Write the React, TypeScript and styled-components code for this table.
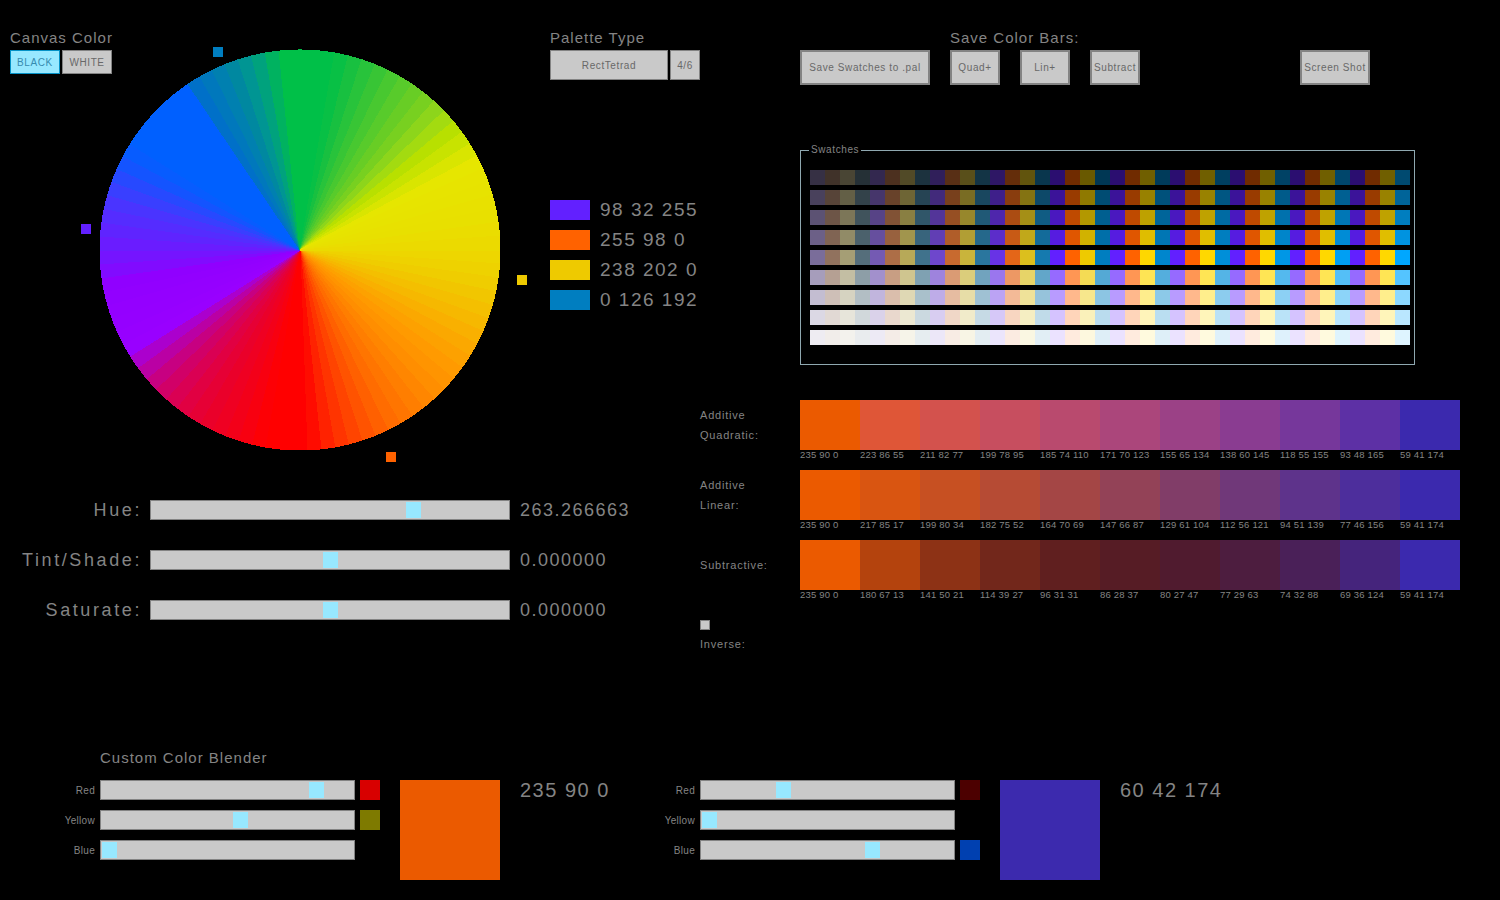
import React from "react";
import styled, { createGlobalStyle } from "styled-components";

const TEXT = "#848484";
const BORDER = "#838383";
const BASE = "#c9c9c9";
const BTN_TEXT = "#686868";
const THUMB = "#97e8ff";

const GlobalStyle = createGlobalStyle`
  * { box-sizing: border-box; }
  html, body { margin: 0; padding: 0; background: #000; }
  body { font-family: "Liberation Sans", Arial, sans-serif; }
`;

type RGB = [number, number, number];

// ---------- data ----------
const PALETTE: RGB[] = [
  [98, 32, 255],
  [255, 98, 0],
  [238, 202, 0],
  [0, 126, 192],
];

const SHADE = [0.44, 0.6, 0.75, 0.88];
const TINT = [0.33, 0.55, 0.73, 0.87];

const rgb = (c: number[]) =>
  `rgb(${c.map((v) => Math.max(0, Math.min(255, Math.round(v)))).join(",")})`;

function groupColor(base: RGB, g: number): number[] {
  if (g <= 4) {
    const s = 0.2 + 0.2 * g;
    const m = (base[0] + base[1] + base[2]) / 3;
    return base.map((c) => m + s * (c - m));
  }
  const f = Math.min(1 + 0.066 * (g - 4), 255 / Math.max(...base));
  return base.map((c) => c * f);
}

function swatchColor(row: number, col: number) {
  let c = groupColor(PALETTE[col % 4], Math.floor(col / 4));
  if (row < 4) c = c.map((v) => v * SHADE[row]);
  else if (row > 4) c = c.map((v) => v + (255 - v) * TINT[row - 5]);
  return rgb(c);
}

const BARS = [
  {
    label: ["Additive", "Quadratic:"],
    values: ["235 90 0", "223 86 55", "211 82 77", "199 78 95", "185 74 110", "171 70 123", "155 65 134", "138 60 145", "118 55 155", "93 48 165", "59 41 174"],
  },
  {
    label: ["Additive", "Linear:"],
    values: ["235 90 0", "217 85 17", "199 80 34", "182 75 52", "164 70 69", "147 66 87", "129 61 104", "112 56 121", "94 51 139", "77 46 156", "59 41 174"],
  },
  {
    label: ["Subtractive:"],
    values: ["235 90 0", "180 67 13", "141 50 21", "114 39 27", "96 31 31", "86 28 37", "80 27 47", "77 29 63", "74 32 88", "69 36 124", "59 41 174"],
  },
];

const WHEEL_STOPS: [number, string][] = [
  [0, "#ecd800"], [8, "#eed000"], [15, "#f2c400"], [22, "#f6b800"], [30, "#fba800"],
  [38, "#ff9a00"], [46, "#ff8e00"], [54, "#ff7e00"], [62, "#ff6c00"], [68, "#ff5a00"],
  [74, "#ff4400"], [79, "#ff3000"], [84, "#ff1800"], [88, "#ff0000"], [100, "#ff0000"],
  [106, "#f80010"], [113, "#f00020"], [120, "#e8002e"], [127, "#e00045"], [133, "#d40060"],
  [139, "#c40088"], [145, "#b000c0"], [150, "#9900ff"], [170, "#9000ff"], [176, "#7a10ff"],
  [182, "#6a1cff"], [188, "#5a28ff"], [194, "#4a34ff"], [200, "#3044ff"], [206, "#1454ff"],
  [212, "#0060ff"], [234, "#0060ff"], [238, "#0070c8"], [246, "#0080b0"], [250, "#0088a0"],
  [255, "#009890"], [260, "#00a870"], [265, "#00c048"], [280, "#00c048"], [286, "#18c040"],
  [292, "#30c438"], [298, "#48c830"], [304, "#60cc28"], [310, "#78d020"], [316, "#98d818"],
  [322, "#b8e000"], [328, "#d0e400"], [333, "#e6e600"], [350, "#e8e000"], [360, "#ecd800"],
];

const hex = (h: string) => [1, 3, 5].map((i) => parseInt(h.slice(i, i + 2), 16));

function wheelColor(a: number) {
  for (let i = 0; i < WHEEL_STOPS.length - 1; i++) {
    const [a0, c0] = WHEEL_STOPS[i];
    const [a1, c1] = WHEEL_STOPS[i + 1];
    if (a >= a0 && a <= a1) {
      const t = (a - a0) / (a1 - a0 || 1);
      const x = hex(c0);
      const y = hex(c1);
      return rgb(x.map((v, k) => v + (y[k] - v) * t));
    }
  }
  return WHEEL_STOPS[0][1];
}

const CX = 300;
const CY = 250;
const R = 200;
const STEP = 4;

// banded wheel, one wedge per STEP degrees
const wedges = Array.from({ length: 360 / STEP }, (_, i) => {
  const a0 = (i * STEP * Math.PI) / 180;
  const a1 = ((i + 1) * STEP * Math.PI) / 180;
  const p = (a: number) => `${CX + R * Math.cos(a)} ${CY + R * Math.sin(a)}`;
  return { d: `M${CX} ${CY} L${p(a0)} A${R} ${R} 0 0 1 ${p(a1)} Z`, fill: wheelColor(i * STEP + STEP / 2) };
});

const MARKERS = [
  { x: 213, y: 47, c: PALETTE[3] },
  { x: 81, y: 224, c: PALETTE[0] },
  { x: 517, y: 275, c: PALETTE[2] },
  { x: 386, y: 452, c: PALETTE[1] },
];

// ---------- styled parts ----------
const Page = styled.div`
  width: 1500px;
  height: 900px;
  background: #000;
  overflow: hidden;
  color: ${TEXT};
  font-family: "Liberation Sans", Arial, sans-serif;
  display: flex;
  flex-direction: column;
`;

const MainRow = styled.div`
  display: flex;
  height: 750px;
`;

const LeftColumn = styled.div`
  width: 700px;
  display: flex;
  flex-direction: column;
`;

const TopLeft = styled.div`
  display: flex;
  height: 470px;
`;

const WheelPanel = styled.div`
  width: 540px;
  padding: 30px 0 0 10px;
  display: flex;
  align-items: flex-start;
`;

const ControlsCol = styled.div`
  width: 102px;
  display: flex;
  flex-direction: column;
`;

const WheelSvg = styled.svg`
  margin-left: 8px;
  overflow: visible;
  flex: none;
`;

const Heading = styled.div<{ $indent?: number }>`
  font-size: 15px;
  line-height: 15px;
  height: 15px;
  letter-spacing: 1px;
  white-space: nowrap;
  margin-bottom: 5px;
  padding-left: ${(p) => p.$indent ?? 0}px;
`;

const ButtonRow = styled.div<{ $gap: number; $indent?: number }>`
  display: flex;
  gap: ${(p) => p.$gap}px;
  margin-left: ${(p) => p.$indent ?? 0}px;
`;

const Button = styled.button<{ $w: number; $h: number; $bw?: number; $active?: boolean; $ml?: number }>`
  width: ${(p) => p.$w}px;
  height: ${(p) => p.$h}px;
  margin: 0 0 0 ${(p) => p.$ml ?? 0}px;
  padding: 0;
  flex: none;
  display: flex;
  align-items: center;
  justify-content: center;
  background: ${(p) => (p.$active ? THUMB : BASE)};
  border: ${(p) => p.$bw ?? 1}px solid ${(p) => (p.$active ? "#0492c7" : BORDER)};
  color: ${(p) => (p.$active ? "#368baf" : BTN_TEXT)};
  font-family: inherit;
  font-size: 10px;
  letter-spacing: 0.6px;
  white-space: nowrap;
  overflow: hidden;
  cursor: pointer;
`;

const PalettePanel = styled.div`
  width: 160px;
  padding: 30px 0 0 10px;
  display: flex;
  flex-direction: column;
`;

const SwatchList = styled.div`
  margin-top: 120px;
  display: flex;
  flex-direction: column;
  gap: 10px;
`;

const SwatchItem = styled.div`
  display: flex;
  align-items: center;
  gap: 10px;
  height: 20px;
`;

const Chip = styled.div<{ $c: string; $w: number; $h: number }>`
  width: ${(p) => p.$w}px;
  height: ${(p) => p.$h}px;
  background: ${(p) => p.$c};
  flex: none;
`;

const BigValue = styled.span<{ $size?: number; $ml?: number }>`
  font-size: ${(p) => p.$size ?? 19}px;
  line-height: 20px;
  letter-spacing: 1.5px;
  white-space: nowrap;
  margin-left: ${(p) => p.$ml ?? 0}px;
`;

const SliderBlock = styled.div`
  margin-top: 30px;
  display: flex;
  flex-direction: column;
  gap: 30px;
`;

const SliderRow = styled.div`
  display: flex;
  align-items: center;
  gap: 10px;
  height: 20px;
`;

const SliderLabel = styled.div`
  width: 142px;
  margin-right: -2px;
  text-align: right;
  font-size: 18px;
  line-height: 20px;
  letter-spacing: 2.6px;
  white-space: nowrap;
`;

const Track = styled.div<{ $w: number }>`
  position: relative;
  width: ${(p) => p.$w}px;
  height: 20px;
  flex: none;
  background: ${BASE};
  border: 1px solid ${BORDER};
`;

const Thumb = styled.div`
  position: absolute;
  top: 1px;
  bottom: 1px;
  width: 15px;
  background: ${THUMB};
`;

const RightColumn = styled.div`
  width: 800px;
  padding-top: 30px;
  display: flex;
  flex-direction: column;
`;

const GroupBox = styled.div`
  position: relative;
  margin: 65px 0 0 100px;
  width: 615px;
  height: 215px;
  border: 1px solid #8fa8b0;
  padding: 19px 0 0 9px;
`;

const GroupLabel = styled.span`
  position: absolute;
  top: -6px;
  left: 8px;
  padding: 0 2px;
  background: #000;
  font-size: 10px;
  line-height: 10px;
  letter-spacing: 0.6px;
`;

const SwatchGrid = styled.div`
  display: grid;
  grid-template-columns: repeat(40, 15px);
  grid-auto-rows: 15px;
  row-gap: 5px;
`;

const BarsBlock = styled.div`
  margin-top: 35px;
  display: flex;
  flex-direction: column;
`;

const BarRow = styled.div`
  display: flex;
  height: 70px;
`;

const BarLabel = styled.div`
  width: 100px;
  height: 50px;
  display: flex;
  flex-direction: column;
  justify-content: center;
  font-size: 11px;
  line-height: 20px;
  letter-spacing: 0.8px;
  white-space: nowrap;
`;

const Cells = styled.div`
  display: flex;
`;

const Cell = styled.div`
  width: 60px;
  display: flex;
  flex-direction: column;
`;

const CellColor = styled.div<{ $c: string }>`
  height: 50px;
  background: ${(p) => p.$c};
`;

const CellText = styled.div`
  font-size: 9.5px;
  line-height: 10px;
  letter-spacing: 0.2px;
  white-space: nowrap;
`;

const CheckBox = styled.div`
  margin-top: 10px;
  width: 10px;
  height: 10px;
  background: ${BASE};
  border: 1px solid ${BORDER};
`;

const SmallLabel = styled.div`
  margin-top: 9px;
  font-size: 11px;
  line-height: 11px;
  letter-spacing: 0.8px;
`;

const BlenderSection = styled.div`
  display: flex;
  flex-direction: column;
`;

const BlenderRow = styled.div`
  display: flex;
  padding-left: 40px;
  margin-top: 10px;
`;

const Blender = styled.div`
  width: 600px;
  display: flex;
  align-items: flex-start;
`;

const BlendSliders = styled.div`
  display: flex;
  flex-direction: column;
  gap: 10px;
`;

const BlendRow = styled.div`
  display: flex;
  align-items: center;
  gap: 5px;
  height: 20px;
`;

const BlendLabel = styled.div`
  width: 55px;
  text-align: right;
  font-size: 10px;
  letter-spacing: 0.3px;
  white-space: nowrap;
`;

const ColorBlock = styled.div<{ $c: string }>`
  width: 100px;
  height: 100px;
  margin-left: 20px;
  background: ${(p) => p.$c};
  flex: none;
`;

// ---------- components ----------
function Slider({ w, frac }: { w: number; frac: number }) {
  const left = Math.max(1, Math.min(w - 18, frac * w - 8.5));
  return (
    <Track $w={w}>
      <Thumb style={{ left }} />
    </Track>
  );
}

type BlendChannel = { name: string; v: number; chip?: string };

function ColorBlender({ channels, color, value }: { channels: BlendChannel[]; color: string; value: string }) {
  return (
    <Blender>
      <BlendSliders>
        {channels.map((ch) => (
          <BlendRow key={ch.name}>
            <BlendLabel>{ch.name}</BlendLabel>
            <Slider w={255} frac={ch.v / 255} />
            <Chip $c={ch.chip ?? "transparent"} $w={20} $h={20} />
          </BlendRow>
        ))}
      </BlendSliders>
      <ColorBlock $c={color} />
      <BigValue $size={20} $ml={20}>{value}</BigValue>
    </Blender>
  );
}

export default function App() {
  const sliders = [
    { label: "Hue:", frac: 263.266663 / 360, value: "263.266663" },
    { label: "Tint/Shade:", frac: 0.5, value: "0.000000" },
    { label: "Saturate:", frac: 0.5, value: "0.000000" },
  ];

  return (
    <Page>
      <GlobalStyle />
      <MainRow>
        <LeftColumn>
          <TopLeft>
            <WheelPanel>
              <ControlsCol>
                <Heading>Canvas Color</Heading>
                <ButtonRow $gap={2}>
                  <Button $w={50} $h={24} $active>BLACK</Button>
                  <Button $w={50} $h={24}>WHITE</Button>
                </ButtonRow>
              </ControlsCol>
              <WheelSvg width={410} height={440} viewBox="120 30 410 440" shapeRendering="crispEdges">
                {wedges.map((w, i) => (
                  <path key={i} d={w.d} fill={w.fill} stroke={w.fill} strokeWidth={1} strokeLinejoin="bevel" />
                ))}
                {MARKERS.map((m, i) => (
                  <rect key={i} x={m.x} y={m.y} width={10} height={10} fill={rgb(m.c)} />
                ))}
              </WheelSvg>
            </WheelPanel>

            <PalettePanel>
              <Heading>Palette Type</Heading>
              <ButtonRow $gap={2}>
                <Button $w={118} $h={30}>RectTetrad</Button>
                <Button $w={30} $h={30}>4/6</Button>
              </ButtonRow>
              <SwatchList>
                {PALETTE.map((c) => (
                  <SwatchItem key={c.join()}>
                    <Chip $c={rgb(c)} $w={40} $h={20} />
                    <BigValue>{c.join(" ")}</BigValue>
                  </SwatchItem>
                ))}
              </SwatchList>
            </PalettePanel>
          </TopLeft>

          <SliderBlock>
            {sliders.map((s) => (
              <SliderRow key={s.label}>
                <SliderLabel>{s.label}</SliderLabel>
                <Slider w={360} frac={s.frac} />
                <BigValue $size={18}>{s.value}</BigValue>
              </SliderRow>
            ))}
          </SliderBlock>
        </LeftColumn>

        <RightColumn>
          <Heading $indent={250}>Save Color Bars:</Heading>
          <ButtonRow $gap={20} $indent={100}>
            <Button $w={130} $h={35} $bw={2}>Save Swatches to .pal</Button>
            <Button $w={50} $h={35} $bw={2}>Quad+</Button>
            <Button $w={50} $h={35} $bw={2}>Lin+</Button>
            <Button $w={50} $h={35} $bw={2}>Subtract</Button>
            <Button $w={70} $h={35} $bw={2} $ml={140}>Screen Shot</Button>
          </ButtonRow>

          <GroupBox>
            <GroupLabel>Swatches</GroupLabel>
            <SwatchGrid>
              {Array.from({ length: 9 * 40 }, (_, i) => (
                <Chip key={i} $c={swatchColor(Math.floor(i / 40), i % 40)} $w={15} $h={15} />
              ))}
            </SwatchGrid>
          </GroupBox>

          <BarsBlock>
            {BARS.map((bar) => (
              <BarRow key={bar.label.join()}>
                <BarLabel>
                  {bar.label.map((l) => (
                    <div key={l}>{l}</div>
                  ))}
                </BarLabel>
                <Cells>
                  {bar.values.map((v, i) => (
                    <Cell key={i}>
                      <CellColor $c={`rgb(${v.split(" ").join(",")})`} />
                      <CellText>{v}</CellText>
                    </Cell>
                  ))}
                </Cells>
              </BarRow>
            ))}
            <CheckBox />
            <SmallLabel>Inverse:</SmallLabel>
          </BarsBlock>
        </RightColumn>
      </MainRow>

      <BlenderSection>
        <Heading $indent={100}>Custom Color Blender</Heading>
        <BlenderRow>
          <ColorBlender
            channels={[
              { name: "Red", v: 216, chip: "#d80000" },
              { name: "Yellow", v: 140, chip: "#7e7a00" },
              { name: "Blue", v: 0 },
            ]}
            color="rgb(235,90,0)"
            value="235 90 0"
          />
          <ColorBlender
            channels={[
              { name: "Red", v: 83, chip: "#4c0000" },
              { name: "Yellow", v: 0 },
              { name: "Blue", v: 172, chip: "#0040b0" },
            ]}
            color="rgb(60,42,174)"
            value="60 42 174"
          />
        </BlenderRow>
      </BlenderSection>
    </Page>
  );
}
